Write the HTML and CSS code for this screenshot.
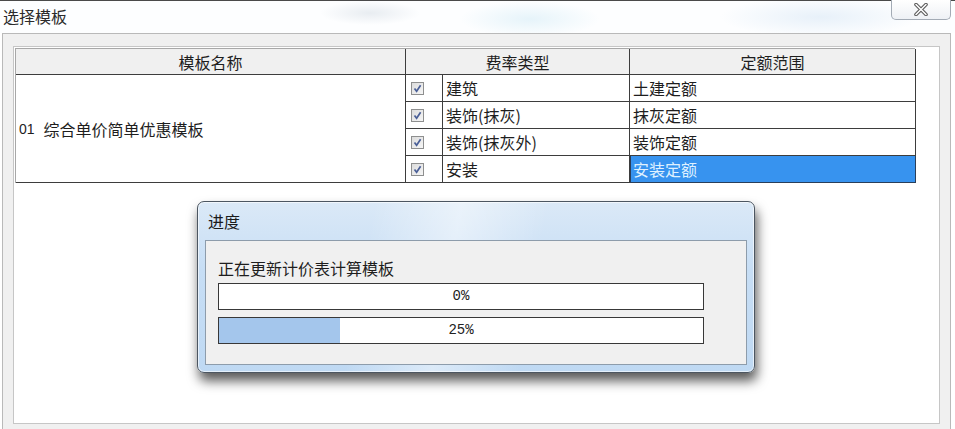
FILE: index.html
```html
<!DOCTYPE html>
<html lang="zh-CN">
<head>
    <meta charset="UTF-8">
    <title>选择模板</title>
    <link rel="stylesheet" href="styles.css">
</head>
<body>
  <div class="window">
    <div class="titlebar">
      <span class="title">选择模板</span>
      <button class="close-btn" type="button" aria-label="关闭">
        <svg width="18" height="13" viewBox="0 0 18 13">
          <path d="M4 1.5 L14 11.5 M14 1.5 L4 11.5" stroke="#5a5a5a" stroke-width="3.6" stroke-linecap="round"/>
          <path d="M4 1.5 L14 11.5 M14 1.5 L4 11.5" stroke="#ffffff" stroke-width="1.5" stroke-linecap="round"/>
        </svg>
      </button>
    </div>

    <div class="frame">
      <div class="client">
        <div class="grid">
          <div class="cell head">模板名称</div>
          <div class="cell head span-type">费率类型</div>
          <div class="cell head">定额范围</div>

          <div class="cell name"><span class="code">01</span>综合单价简单优惠模板</div>

          <div class="cell check"><span class="box"></span></div>
          <div class="cell">建筑</div>
          <div class="cell">土建定额</div>

          <div class="cell check"><span class="box"></span></div>
          <div class="cell">装饰(抹灰)</div>
          <div class="cell">抹灰定额</div>

          <div class="cell check"><span class="box"></span></div>
          <div class="cell">装饰(抹灰外)</div>
          <div class="cell">装饰定额</div>

          <div class="cell check"><span class="box"></span></div>
          <div class="cell">安装</div>
          <div class="cell selected">安装定额</div>
        </div>
      </div>
    </div>

    <!-- 进度对话框，盖在主窗口上 -->
    <div class="progress-dlg">
      <div class="dlg-title">进度</div>
      <div class="dlg-body">
        <div class="dlg-label">正在更新计价表计算模板</div>
        <div class="bar"><span class="bar-fill" style="width: 0%"></span><span class="bar-text">0%</span></div>
        <div class="bar"><span class="bar-fill" style="width: 25%"></span><span class="bar-text">25%</span></div>
      </div>
    </div>
  </div>
</body>
</html>
```

FILE: styles.css
```css
/* 基础 */
body {
    margin: 0;
    padding: 0;
    background: #fff;
    font-family: "Noto Sans CJK SC", "Liberation Sans", sans-serif;
    font-size: 16px;
    color: #1e1e1e;
}

.window {
    position: relative;
    width: 955px;
    height: 429px;
    overflow: hidden;
}

/* 标题栏（半透明玻璃效果） */
.titlebar {
    display: flex;
    justify-content: space-between;
    align-items: flex-start;
    height: 32px;
    border-top: 1px solid #4a4a4a;
    background:
        radial-gradient(ellipse 50px 12px at 370px 12px, rgba(170,185,200,0.25), transparent),
        radial-gradient(ellipse 70px 18px at 530px 18px, rgba(195,228,242,0.4), transparent),
        radial-gradient(ellipse 100px 20px at 820px 16px, rgba(205,224,242,0.45), transparent),
        #fdfeff;
}

.title {
    padding: 3px 0 0 3px;
    font-size: 16px;
    color: #2b2b2b;
}

.close-btn {
    width: 60px;
    height: 20px;
    margin-right: 4px;
    margin-top: -1px;
    padding: 0;
    border: 1px solid #a3abb5;
    border-top: none;
    border-radius: 0 0 5px 5px;
    background: linear-gradient(#ffffff, #eef1f5);
    display: flex;
    align-items: center;
    justify-content: center;
}

/* 外框 */
.frame {
    margin: 0 4px 0 2px;
    height: 396px;
    box-sizing: border-box;
    border: 1px solid #b9b9b9;
    border-bottom: none;
    background: #f0f0f0;
    padding: 12px 10px 5px 10px;
}

.client {
    height: 100%;
    box-sizing: border-box;
    border: 1px solid #c6c6c6;
    background: #fff;
    padding: 1px 0 0 1px;
}

/* 表格 */
.grid {
    display: grid;
    grid-template-columns: 390px 37px 187px 286px;
    grid-template-rows: 26px repeat(4, 27px);
    width: 900px;
    border-top: 1px solid #a8a8a8;
    border-left: 1px solid #a8a8a8;
    box-sizing: border-box;
}

.cell {
    box-sizing: border-box;
    border-right: 1px solid #3d3d3d;
    border-bottom: 1px solid #3d3d3d;
    padding: 0 3px;
    display: flex;
    align-items: center;
    white-space: nowrap;
    line-height: 1;
}

.head {
    justify-content: center;
    background: #f0f0f0;
}

.span-type {
    grid-column: span 2;
}

.name {
    grid-row: span 4;
    padding-left: 3px;
}

.code {
    font-family: "Liberation Sans", sans-serif;
    font-size: 14px;
    margin-right: 9px;
}

.check {
    padding-left: 5px;
}

.box {
    width: 11px;
    height: 11px;
    border: 1px solid #8e8f8f;
    background:
        url("data:image/svg+xml;utf8,<svg xmlns='http://www.w3.org/2000/svg' width='11' height='11'><path d='M2.5 5.5 L4.6 8.3 L8.6 2.2' fill='none' stroke='%234a5f97' stroke-width='1.7'/></svg>") no-repeat center,
        linear-gradient(135deg, #dcdcdc, #f6f6f6);
}

.selected {
    background: #3793ef;
    color: #dff1ff;
    border: 1px solid #2a3f5a;
    border-top: none;
    padding-left: 2px;
}

/* 进度对话框 */
.progress-dlg {
    position: absolute;
    left: 197px;
    top: 201px;
    width: 558px;
    height: 172px;
    box-sizing: border-box;
    border: 1px solid #4c5661;
    border-radius: 7px;
    background:
        linear-gradient(100deg, rgba(255,255,255,0) 30%, rgba(255,255,255,0.45) 45%, rgba(255,255,255,0) 60%),
        linear-gradient(#dbe9f7, #c7def5 40%, #bfd9f3);
    box-shadow: 2px 8px 12px rgba(0,0,0,0.65), inset 0 0 0 1px rgba(255,255,255,0.6);
    display: flex;
    flex-direction: column;
}

.dlg-title {
    height: 38px;
    padding-left: 10px;
    line-height: 38px;
    color: #1b1b1b;
}

.dlg-body {
    flex: 1;
    margin: 0 7px 7px 7px;
    border: 1px solid #8d9cab;
    background: #f0f0f0;
    padding: 16px 0 0 12px;
}

.dlg-label {
    height: 22px;
    line-height: 22px;
    margin-bottom: 4px;
}

.bar {
    position: relative;
    width: 486px;
    height: 27px;
    box-sizing: border-box;
    border: 1px solid #383838;
    background: #fff;
    margin-bottom: 7px;
}

.bar-fill {
    position: absolute;
    left: 0;
    top: 0;
    bottom: 0;
    background: #a4c6ec;
}

.bar-text {
    position: relative;
    display: block;
    text-align: center;
    line-height: 25px;
    font-family: "Liberation Mono", monospace;
    font-size: 14px;
    color: #222;
}
```
